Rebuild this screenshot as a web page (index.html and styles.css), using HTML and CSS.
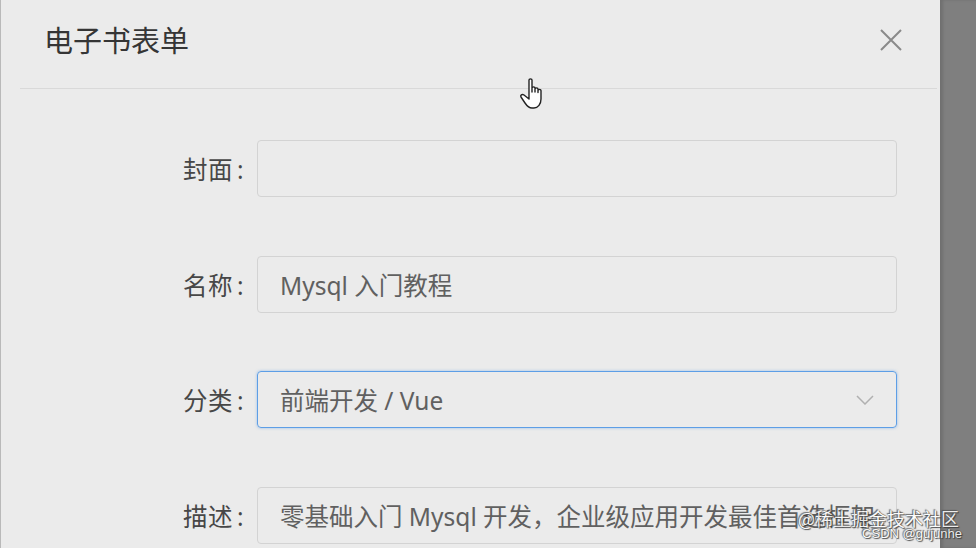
FILE: index.html
```html
<!DOCTYPE html>
<html lang="zh">
<head>
<meta charset="utf-8">
<title>电子书表单</title>
<link rel="stylesheet" href="styles.css">
</head>
<body>
<div class="screen">
  <div class="dialog">
    <div class="dialog-header">
      <span class="dialog-title">电子书表单</span>
      <svg class="close" width="22" height="22" viewBox="0 0 22 22"><path d="M1 1 L21 21 M21 1 L1 21" stroke="#8a8a8a" stroke-width="2" fill="none"/></svg>
    </div>
    <div class="divider"></div>
    <div class="form">
      <div class="row">
        <label class="label">封面<span class="colon">:</span></label>
        <div class="control"></div>
      </div>
      <div class="row">
        <label class="label">名称<span class="colon">:</span></label>
        <div class="control">Mysql 入门教程</div>
      </div>
      <div class="row">
        <label class="label">分类<span class="colon">:</span></label>
        <div class="control focus">前端开发 / Vue
          <svg class="chevron" width="18" height="10" viewBox="0 0 18 10"><path d="M1 1 L9 9 L17 1" stroke="#b0b0b0" stroke-width="1.5" fill="none"/></svg>
        </div>
      </div>
      <div class="row">
        <label class="label">描述<span class="colon">:</span></label>
        <div class="control">零基础入门 Mysql 开发，企业级应用开发最佳首选框架</div>
      </div>
    </div>
    <svg class="cursor" width="28" height="34" viewBox="0 0 28 34">
      <path d="M10 3 C10 1.5 13 1.5 13 3 L13 15 L13 11 C13 9.5 16 9.5 16 11 L16 15 L16 12 C16 10.5 19 10.5 19 12 L19 15.5 L19 13.5 C19 12 22 12 22 13.5 L22 22 C22 27 19 31 15 31 L13 31 C10 31 8 29 6 26 L2 20 C1 18.5 3 16.5 5 18 L10 22 Z" fill="#fff" stroke="#222" stroke-width="1.4" stroke-linejoin="round"/>
    </svg>
  </div>
  <div class="overlay"></div>
  <div class="watermark">
    <div class="wm-main">@稀土掘金技术社区</div>
    <div class="wm-sub">CSDN @gujunhe</div>
  </div>
</div>
</body>
</html>
```
FILE: styles.css
```css
html, body {
  margin: 0;
  padding: 0;
}
body {
  width: 976px;
  height: 548px;
  overflow: hidden;
  font-family: "Noto Sans", "Noto Sans CJK SC", sans-serif;
  background: #ebebeb;
}
.screen {
  position: relative;
  display: flex;
  width: 976px;
  height: 548px;
}
.dialog {
  position: relative;
  width: 939px;
  height: 548px;
  background: #ebebeb;
  border-left: 1px solid #b9b9b9;
  overflow: hidden;
}
.overlay {
  flex: 1;
  background: #7f7f7f;
  box-shadow: inset 3px 0 3px rgba(0,0,0,0.12);
}
.dialog-header {
  height: 88px;
  display: flex;
  align-items: center;
  justify-content: space-between;
  padding: 0 38px 0 43px;
  box-sizing: border-box;
}
.dialog-title {
  font-size: 29px;
  color: #353535;
  margin-top: -10px;
}
.close {
  margin-top: -8px;
}
.divider {
  height: 1px;
  background: #d9d9d9;
  margin: 0 3px 0 19px;
}
.form {
  padding-top: 51px;
  display: flex;
  flex-direction: column;
  gap: 58.7px;
}
.row {
  display: flex;
  align-items: center;
}
.label {
  width: 256px;
  text-align: right;
  padding-right: 13px;
  box-sizing: border-box;
  font-size: 24.5px;
  color: #474747;
  letter-spacing: 0.5px;
}
.colon {
  margin-left: 4px;
}
.control {
  position: relative;
  width: 640px;
  height: 57px;
  box-sizing: border-box;
  border: 1px solid #d3d3d3;
  border-radius: 4px;
  padding: 0 12px 0 22px;
  display: flex;
  align-items: center;
  font-size: 24.5px;
  color: #606060;
  white-space: nowrap;
  overflow: hidden;
}
.control.focus {
  border-color: #5d9ee6;
  box-shadow: 0 0 3px rgba(80,150,230,0.55);
}
.chevron {
  position: absolute;
  right: 22px;
  top: 23px;
}
.cursor {
  position: absolute;
  left: 518px;
  top: 77px;
}
.watermark {
  position: absolute;
  right: 16px;
  bottom: 7px;
  text-align: right;
  color: #fff;
  text-shadow: 0 0 1px #333, 1px 1px 1px #333, -1px -1px 1px #555;
  opacity: 0.85;
}
.wm-main {
  font-size: 18px;
  line-height: 18px;
  font-family: "Noto Sans CJK SC", sans-serif;
  margin-right: 1px;
}
.wm-sub {
  font-size: 13px;
  line-height: 14px;
  font-family: "Liberation Sans", sans-serif;
  margin-right: -2px;
}
```
